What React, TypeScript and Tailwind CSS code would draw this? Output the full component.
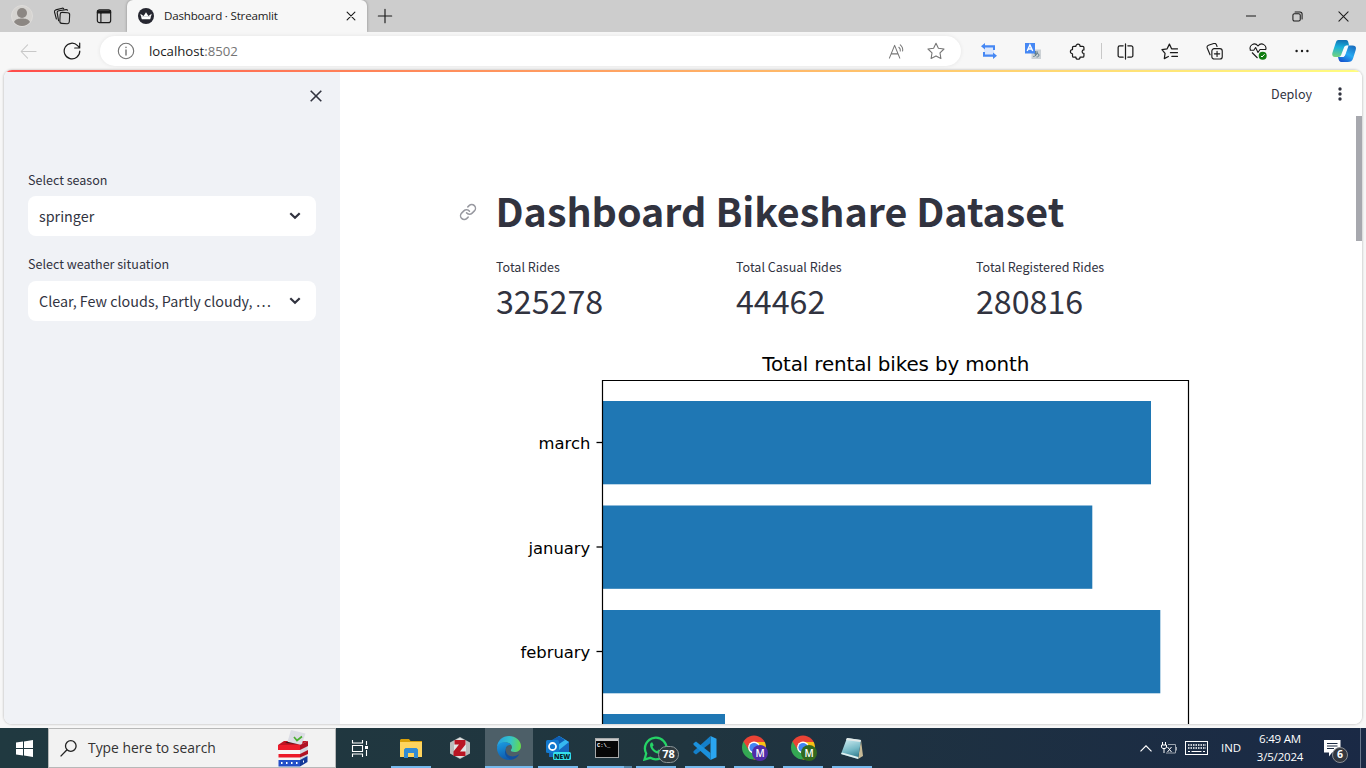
import type { ReactNode } from 'react';

const UI = "font-['Open_Sans','Noto_Sans',sans-serif]";
const BODY = "font-['Noto_Sans_CJK_SC',sans-serif]";

function Line({
  size = 18,
  children,
  color = '#1b1b1b',
  width = 1.1,
}: {
  size?: number;
  children: ReactNode;
  color?: string;
  width?: number;
}) {
  return (
    <svg
      width={size}
      height={size}
      viewBox="0 0 18 18"
      fill="none"
      stroke={color}
      strokeWidth={width}
      strokeLinecap="round"
      strokeLinejoin="round"
      className="shrink-0"
    >
      {children}
    </svg>
  );
}

function Cell({ w, children }: { w: string; children: ReactNode }) {
  return <div className={`flex h-full shrink-0 items-center justify-center ${w}`}>{children}</div>;
}

const STAR = 'M9 1.2 L11.4 6.2 L17 7 L13 10.9 L13.9 16.5 L9 13.9 L4.1 16.5 L5 10.9 L1 7 L6.6 6.2 Z';

function TabStrip() {
  return (
    <div className="flex h-8 shrink-0 bg-[#cdcdcd]">
      <Cell w="w-11">
        <svg width="22" height="22" viewBox="0 0 22 22">
          <circle cx="11" cy="11" r="10.5" fill="#d6d4d1" stroke="#dedcda" />
          <circle cx="11" cy="8" r="5" fill="#8c8783" />
          <path d="M3 17c1.500-3 4.500-3.500 8-3.500s6.500.5 8 3.500c-2 2.800-5 4-8 4s-6-1.200-8-4z" fill="#8c8783" />
        </svg>
      </Cell>
      <Cell w="w-9">
        <Line>
          <rect x="7" y="5.500" width="9.500" height="11" rx="2" transform="rotate(3 11 11)" />
          <path d="M5.600 13.800 4.200 5.800a1.800 1.800 0 0 1 1.500-2l7.500-1.200a1.500 1.500 0 0 1 1.300.6M3.400 12 1.500 5a1.800 1.800 0 0 1 1.200-2.100l6.500-1.700a1.600 1.600 0 0 1 1.500.5" />
        </Line>
      </Cell>
      <Cell w="w-12">
        <Line size={16} width={1.300}>
          <rect x="1.500" y="2" width="15" height="14.500" rx="2.500" />
          <path d="M2 3.500h14M2 5h14" strokeWidth="2.200" />
          <path d="M5.500 6v10" />
        </Line>
      </Cell>
      <div className="-ml-px flex h-8 w-60 items-center rounded-t-md bg-[#f7f7f7] shadow-[0_0_3px_rgba(0,0,0,0.35)] [clip-path:inset(0_-3px_0_-3px)]">
        <svg width="16" height="16" viewBox="0 0 16 16" className="ml-[11px]">
          <circle cx="8" cy="8" r="8" fill="#262730" />
          <path d="M2.300 5.800 5.600 8 8 4.200 10.400 8l3.300-2.200-1.500 5.400H3.800z" fill="#fff" />
          <path d="M3 8.500h10" stroke="#b9bac0" strokeWidth=".5" />
        </svg>
        <span className={`${UI} ml-[10px] flex-1 whitespace-nowrap text-[11.600px] tracking-[-0.2px] text-[#222]`}>
          Dashboard · Streamlit
        </span>
        <div className="mr-[11px] flex">
          <Line size={10} width={2}>
            <path d="M2 2 16 16M16 2 2 16" />
          </Line>
        </div>
      </div>
      <Cell w="w-[35px]">
        <Line size={16} width={1.300}>
          <path d="M9 1.500v15M1.500 9h15" />
        </Line>
      </Cell>
      <div className="flex-1" />
      <Cell w="w-[46px]">
        <Line size={10} width={1.800}>
          <path d="M0 9h18" />
        </Line>
      </Cell>
      <Cell w="w-[46px]">
        <Line size={11} width={1.700}>
          <rect x="1.500" y="4.500" width="12" height="12" rx="2.500" />
          <path d="M5 1.500h8a3.500 3.500 0 0 1 3.500 3.500v8" />
        </Line>
      </Cell>
      <Cell w="w-[46px]">
        <Line size={11} width={1.700}>
          <path d="M1.500 1.500 16.500 16.500M16.500 1.500 1.500 16.500" />
        </Line>
      </Cell>
    </div>
  );
}

function Toolbar() {
  return (
    <div className="flex h-[38px] shrink-0 items-center bg-[#f7f7f7]">
      <Cell w="w-14">
        <Line size={17} color="#c8c8c8">
          <path d="M17 9H1.500M8 2 1.200 9 8 16" />
        </Line>
      </Cell>
      <Cell w="w-8">
        <Line width={1.200}>
          <path d="M16.800 9A7.800 7.800 0 1 1 14.600 3.600L16.500 5.600M16.700 1v5h-5" />
        </Line>
      </Cell>
      <div className="ml-3 flex h-[30px] w-[861px] shrink-0 items-center rounded-full bg-white shadow-[0_0_4px_rgba(0,0,0,0.08)]">
        <div className="ml-[17px] flex">
          <Line color="#737373">
            <circle cx="9" cy="9" r="7.700" />
            <path d="M9 8v5M9 5.300v.3" strokeWidth="1.400" />
          </Line>
        </div>
        <span className={`${UI} ml-[14px] flex-1 pt-px text-[13.200px] text-[#1a1a1a]`}>
          localhost<span className="text-[#747474]">:8502</span>
        </span>
        <Cell w="w-10">
          <Line size={17} color="#767676">
            <path d="M1.500 16 7 2.500 12.500 16M3.500 11.500h7M11.500 4.500a4 4 0 0 1 1.500 4M13 2a7 7 0 0 1 2.500 6.500" />
          </Line>
        </Cell>
        <Cell w="w-10">
          <Line color="#767676">
            <path d={STAR} />
          </Line>
        </Cell>
        <div className="w-[5px]" />
      </div>
      <div className="w-[6px]" />
      <Cell w="w-11">
        <svg width="16" height="16" viewBox="0 0 16 16">
          <path d="M3 3h10v10H3z" fill="#dce8fd" />
          <path d="M4 0v2.200h10V7h-2V4.400H4V6.500L0 3.200zM12 16v-2.200H2V9h2v2.600h8V9.500l4 3.300z" fill="#4688f4" />
        </svg>
      </Cell>
      <Cell w="w-11">
        <svg width="16" height="16" viewBox="0 0 16 16">
          <rect x="6.500" y="6.500" width="9.500" height="9.500" fill="#ccd1d5" />
          <path d="M8 9h5M10.500 8v5M8.200 13.500c2 0 4-2 4.300-4M9 11c1-1 5-1 5 1s-2 2-2.500 2" stroke="#607d8b" fill="none" strokeWidth=".9" />
          <rect width="10" height="10.500" fill="#4688f4" />
          <path d="M2.200 8 4.900 2l2.800 6M3.300 6h3.300" stroke="#fff" strokeWidth="1.400" fill="none" />
        </svg>
      </Cell>
      <Cell w="w-11">
        <Line size={17} width={1.300}>
          <path d="M5 3.500h2.300a2.200 2.200 0 0 1 4.400 0H14.500a1.300 1.300 0 0 1 1.300 1.300V7.300a1.900 1.900 0 0 0 0 3.800V13.700a1.300 1.300 0 0 1-1.300 1.300H11.700a2.200 2.200 0 0 1-4.400 0H5a1.300 1.300 0 0 1-1.300-1.300V11.400a2.200 2.200 0 0 1 0-4.400V4.800A1.300 1.300 0 0 1 5 3.500z" />
        </Line>
      </Cell>
      <div className="mx-[2px] h-4 w-px bg-[#c8c8c8]" />
      <Cell w="w-[43px]">
        <Line size={17} width={1.300}>
          <path d="M9 1v16M6.500 3H3a1.800 1.800 0 0 0-1.800 1.800v8.400A1.800 1.800 0 0 0 3 15h3.500M11.500 3H15a1.800 1.800 0 0 1 1.800 1.800v8.400A1.800 1.800 0 0 1 15 15h-3.500" />
        </Line>
      </Cell>
      <Cell w="w-[45px]">
        <Line size={17} width={1.300}>
          <path d="M7.800 14.300 3.500 16.500 4.300 11 1 7l5.500-.8L8.900 1.200l2.300 4.900M11.500 6.200h6M10 10.200h7.500M11.500 14.200h6" />
        </Line>
      </Cell>
      <Cell w="w-11">
        <Line size={17} width={1.200}>
          <rect x="6.200" y="6" width="11" height="11" rx="2.500" />
          <path d="M11.700 8.700v5.600M8.900 11.500h5.600M4.300 12.500 1.300 5.200a2.200 2.200 0 0 1 1.300-2.800l5.600-1.800a2.300 2.300 0 0 1 2.900 1.400l.6 1.700" />
        </Line>
      </Cell>
      <Cell w="w-11">
        <svg width="18" height="18" viewBox="0 0 18 18" fill="none">
          <path d="M1.500 8C-.5 3.500 5.500-.5 9 4c3.500-4.500 9.500-.5 7.500 4M3 10.500l5.500 5.500M.8 8.200h4L6.600 5.500l2.400 5 2-3h5.500" stroke="#1b1b1b" strokeWidth="1.100" strokeLinejoin="round" />
          <circle cx="13.700" cy="13.700" r="4" fill="#107c10" />
          <path d="m12 14 1 1 2.600-2.800" stroke="#fff" />
        </svg>
      </Cell>
      <Cell w="w-11">
        <svg width="14" height="4" viewBox="0 0 14 4" fill="#1b1b1b">
          <circle cx="1.600" cy="2" r="1.200" />
          <circle cx="7" cy="2" r="1.200" />
          <circle cx="12.400" cy="2" r="1.200" />
        </svg>
      </Cell>
      <Cell w="w-10">
        <svg width="24" height="24" viewBox="0 0 24 24">
          <defs>
            <linearGradient id="cpA" x1="0.300" y1="0" x2="0.200" y2="1">
              <stop offset="0" stopColor="#1273b4" />
              <stop offset=".4" stopColor="#18b0dc" />
              <stop offset="1" stopColor="#75d47c" />
            </linearGradient>
            <linearGradient id="cpB" x1="0.800" y1="0" x2="0.200" y2="1">
              <stop offset="0" stopColor="#1a6fc0" />
              <stop offset=".5" stopColor="#27aaf2" />
              <stop offset="1" stopColor="#1552ce" />
            </linearGradient>
          </defs>
          <path d="M16 6.500h4.500c3 0 4 1.500 3.200 4.500l-2.500 8c-1 3-2.500 4-5.500 4H9.500c-2 0-2.900-2-3.500-5h4c2 0 2.500-1 3-3z" fill="url(#cpB)" />
          <path d="M6.500 1H14c2 0 2.500 2 3 5.500h-2.500c-1.500 0-2.200 1-2.700 2.600L9.300 15.500c-.5 1.500-1.500 2.500-3 2.500H3c-2.500 0-3.300-2-2.500-4.500l3-9C4.300 2 4.900 1 6.500 1z" fill="url(#cpA)" />
          <path d="M14.500 6.700h2l-3 8.500c-.6 1.900-1.500 2.800-3.500 2.800H8.200c1-.3 1.500-1 2-2.600l2-6c.4-1.500 1-2.300 2.300-2.700z" fill="#f4fbff" />
        </svg>
      </Cell>
    </div>
  );
}

function Select({ label, value }: { label: string; value: string }) {
  return (
    <div>
      <div className="flex h-5 items-center text-[12.540px] whitespace-nowrap">{label}</div>
      <div className="mt-[6px] flex h-10 items-center rounded-lg bg-white pr-[15px] pl-[11px]">
        <span className="flex-1 text-[14.330px] whitespace-nowrap">{value}</span>
        <svg width="12" height="8" viewBox="0 0 12 8" fill="none" stroke="#31333f" strokeWidth="2.200">
          <path d="M1.300 1.200 6 5.800l4.700-4.600" />
        </svg>
      </div>
    </div>
  );
}

function Sidebar() {
  return (
    <aside className="flex w-[336px] shrink-0 flex-col bg-[#f0f2f6] px-6">
      <div className="-mr-[6px] flex h-[98px] justify-end pt-[18px]">
        <svg width="12" height="12" viewBox="0 0 12 12" stroke="#31333f" strokeWidth="1.600">
          <path d="M.7.7 11.300 11.300M11.300.7.7 11.300" />
        </svg>
      </div>
      <div className="flex flex-col gap-[18.500px]">
        <Select label="Select season" value="springer" />
        <Select label="Select weather situation" value="Clear, Few clouds, Partly cloudy, …" />
      </div>
    </aside>
  );
}

function Metric({ label, value }: { label: string; value: string }) {
  return (
    <div className="w-60">
      <div className="flex h-5 items-center text-[12.540px] whitespace-nowrap">{label}</div>
      <div className="flex h-[46px] items-center text-[32.200px]">{value}</div>
    </div>
  );
}

const BARS = [
  { label: 'march', y: 51, w: 548 },
  { label: 'january', y: 155.5, w: 489.3 },
  { label: 'february', y: 260, w: 557.3 },
  { label: '', y: 364, w: 122 },
];

function Chart() {
  return (
    <svg width="704" height="374" viewBox="0 0 704 374" className="block font-['DejaVu_Sans',sans-serif]">
      <text x="399.800" y="21" fontSize="19.900" textAnchor="middle" textLength="267">
        Total rental bikes by month
      </text>
      {BARS.map((b) => (
        <g key={b.y}>
          <rect x="107" y={b.y} width={b.w} height="83.300" fill="#1f77b4" />
          {b.label && (
            <>
              <path d={`M100.500 ${b.y + 41.5}h6`} stroke="#000" strokeWidth="1.300" />
              <text x="94.300" y={b.y + 48} fontSize="16.400" textAnchor="end">
                {b.label}
              </text>
            </>
          )}
        </g>
      ))}
      <path d="M106.500 374V30.500H692.500V374" fill="none" stroke="#000" strokeWidth="1.200" />
    </svg>
  );
}

function Main() {
  return (
    <main className="flex min-w-0 flex-1 bg-white">
      <div className="flex flex-1 flex-col pl-[119px]">
        <div className="flex h-11 shrink-0 items-center justify-end pr-[14px]">
          <span className="text-[12.540px]">Deploy</span>
          <svg width="4" height="14" viewBox="0 0 4 14" fill="#31333f" className="ml-[26px]">
            <circle cx="2" cy="2" r="1.700" />
            <circle cx="2" cy="7" r="1.700" />
            <circle cx="2" cy="12" r="1.700" />
          </svg>
        </div>
        <div className="mt-[69px] flex h-[53px] shrink-0 items-center">
          <svg
            width="18"
            height="18"
            viewBox="0 0 24 24"
            fill="none"
            stroke="#9899a0"
            strokeWidth="2"
            strokeLinecap="round"
            strokeLinejoin="round"
          >
            <path d="M10 13a5 5 0 0 0 7.540.54l3-3a5 5 0 0 0-7.070-7.070l-1.720 1.710" />
            <path d="M14 11a5 5 0 0 0-7.540-.54l-3 3a5 5 0 0 0 7.070 7.070l1.710-1.710" />
          </svg>
          <h1 className="ml-[18.500px] pb-[3px] text-[39.400px] font-bold whitespace-nowrap">
            Dashboard Bikeshare Dataset
          </h1>
        </div>
        <div className="mt-[19px] ml-[37px] flex shrink-0">
          <Metric label="Total Rides" value="325278" />
          <Metric label="Total Casual Rides" value="44462" />
          <Metric label="Total Registered Rides" value="280816" />
        </div>
        <div className="mt-[27px] ml-[37px]">
          <Chart />
        </div>
      </div>
      <div className="mt-11 h-[125px] w-[6px] bg-[#a7a8ae]" />
    </main>
  );
}

function Task({ children, open = true, active = false }: { children: ReactNode; open?: boolean; active?: boolean }) {
  return (
    <div
      className={`relative flex h-10 w-12 shrink-0 flex-col items-center ${active ? 'bg-[#4d5f68]' : ''}`}
    >
      <div className="flex h-[38px] items-center pt-[2px]">{children}</div>
      {open && <div className={`h-[2px] bg-[#76b9ed] ${active ? 'w-12' : 'w-10'}`} />}
    </div>
  );
}

function Chrome({ id, badge }: { id: string; badge: string }) {
  return (
    <svg width="26" height="26" viewBox="0 0 26 26" className={`${UI} overflow-visible`}>
      <clipPath id={id}>
        <circle cx="13" cy="12.500" r="12" />
      </clipPath>
      <g clipPath={`url(#${id})`}>
        <path d="M0 0h26v7H13L7.800 15.500 0 6z" fill="#ea4335" />
        <path d="M0 5.500 2.600 6.500 8 15.500l5 2.500 3 0-4.500 8H0z" fill="#34a853" />
        <path d="M13 7h13v19H11.500L18.200 15.500z" fill="#fbc116" />
      </g>
      <circle cx="13" cy="12.500" r="5.900" fill="#fff" />
      <circle cx="13" cy="12.500" r="4.600" fill="#4285f4" />
      <circle cx="19" cy="18" r="8" fill={badge} />
      <text x="19" y="21.500" fontSize="10" fontWeight="600" fill="#fff" textAnchor="middle">
        M
      </text>
    </svg>
  );
}

function Taskbar() {
  return (
    <div className={`${UI} flex h-10 shrink-0 bg-linear-to-r from-[#203940] via-[#20353f] to-[#1a2945] text-white`}>
      <Cell w="w-12">
        <svg width="17" height="17" viewBox="0 0 17 17" fill="#fff">
          <path d="M0 2.600 7 1.600V8H0zM8 1.400 17 0v8H8zM0 9h7v6.400L0 14.400zM8 9h9v8l-9-1.400z" />
        </svg>
      </Cell>
      <div className="flex h-10 w-72 shrink-0 items-center border border-[#b7b8b8] bg-[#f2f2f2]">
        <svg width="17" height="17" viewBox="0 0 17 17" fill="none" stroke="#222" strokeWidth="1.300" className="ml-[11px]">
          <circle cx="10.800" cy="6" r="5.300" />
          <path d="M7 9.800.6 16.400" />
        </svg>
        <span className="ml-[11px] flex-1 text-[13.900px] whitespace-nowrap text-[#333]">Type here to search</span>
        <svg width="34" height="38" viewBox="0 0 34 38" className="mr-[24px]">
          <path d="m1 16 6-4h24l-5 5z" fill="#c11322" />
          <path d="m8 14 3-1.500h15l-3 2.500z" fill="#3a1218" />
          <path d="m14 1 14.500 3.500-4 11.500-14-3.200z" fill="#dcdde5" />
          <path d="m17 8 3 3.500 5-4" fill="none" stroke="#4caf32" strokeWidth="1.700" />
          <path d="M1 16h22v21H2z" fill="#f7f7f7" />
          <path d="m23 16 8-4-1 20-7 5z" fill="#d3d6df" />
          <path d="M1 16h22v5H1zM1.500 25H23v3.500H1.500z" fill="#ec1c2b" />
          <path d="m23 16 8-4v5l-8 4zM23 25l8-4v4l-8 3.500z" fill="#b01224" />
          <path d="M1.500 31H23v6.500H1.500z" fill="#2550c8" />
          <path d="m23 31 7.500-4v6L23 37.500z" fill="#143a99" />
          <path d="M4 34h1.500M9 34h1.500M14 34h1.500M19 34h1.500M26 32.500h1" stroke="#fff" strokeWidth="2" />
        </svg>
      </div>
      <div className="flex flex-1 gap-px">
        <Task open={false}>
          <svg width="18" height="17" viewBox="0 0 18 17" fill="none" stroke="#fff" strokeWidth="1.100">
            <path d="M1.500 0v3h10V0M1.500 17v-3h10v3M1.500 5.500h10v6h-10zM15.500 1v4M15.500 10v6" />
            <path d="M14 6h3v3h-3z" fill="#fff" stroke="none" />
          </svg>
        </Task>
        <div className="w-px" />
        <Task>
          <svg width="22" height="19" viewBox="0 0 22 19">
            <path d="M0 1 1 0h8l1.500 2H22v16H0z" fill="#dba008" />
            <path d="M0 3h22v15H0z" fill="#ffd45e" />
            <path d="M4 10.500 5.500 9h11L18 10.500V19h-4v-5H8v5H4z" fill="#338bd3" />
          </svg>
        </Task>
        <Task open={false}>
          <svg width="20" height="22" viewBox="0 0 20 22">
            <path d="m10 0 10 5.500v11L10 22 0 16.500v-11z" fill="#b9bdbd" />
            <path d="m10 1 6 3v14l-6 3-6-3V4z" fill="#e3e5e5" />
            <path d="M4.500 3h11v4.500l-5.500 7h5.500V19h-12v-4.500L9 7.500H4.500z" fill="#b91523" />
          </svg>
        </Task>
        <Task active>
          <svg width="24" height="24" viewBox="0 0 24 24">
            <defs>
              <linearGradient id="edA" x1="0" y1="0.400" x2="1" y2="0.500">
                <stop offset="0" stopColor="#249fe2" />
                <stop offset=".55" stopColor="#35c4c8" />
                <stop offset="1" stopColor="#65d94e" />
              </linearGradient>
              <linearGradient id="edB" x1="0" y1="0" x2="0.300" y2="1">
                <stop offset="0" stopColor="#1b9de2" />
                <stop offset="1" stopColor="#0f5cae" />
              </linearGradient>
            </defs>
            <path d="M0 11C.5 4.500 5.500 0 12 0s12 4.700 12 10c0 4-3 6-6.500 6-3 0-4-1.200-3.500-2.200.5-.8 1-1.300 1-2.600C15 8.500 12 6.500 8.500 6.500S1.500 8 0 11z" fill="url(#edA)" />
            <path d="M0 12c.5-4 4-5.700 7.500-5.700 3 0 5.500 1 7 3C11 8.500 8.500 10.500 8.500 14c0 5 4.500 7.800 8 8.200C15 23.500 13.500 24 12 24 5 24 0 18.500 0 12z" fill="url(#edB)" />
            <path d="M11.500 9.700c-5 3.300-2.500 9.800 2.500 10.600 3 .4 6-.5 8.200-2.300-1 2.500-3.200 4.600-6.200 5.400-7 .6-11.500-7.400-4.500-13.700z" fill="#124f9e" />
          </svg>
        </Task>
        <Task>
          <svg width="26" height="24" viewBox="0 0 26 24">
            <path d="M4 6 14 0l10 6v15H4z" fill="#1568bf" />
            <path d="M14 0 24 6 14 14 6 7z" fill="#35b8f1" />
            <path d="m7 4 7-4 6 4-12 8z" fill="#0e5db2" />
            <rect x="1" y="4" width="13" height="13" rx="1.500" fill="#1379ce" />
            <circle cx="7.500" cy="10.500" r="3.500" fill="none" stroke="#fff" strokeWidth="1.800" />
            <rect x="8" y="16" width="18" height="8" rx="1.500" fill="#35e1ec" />
            <text x="17" y="22.700" fontSize="6.700" fontWeight="800" textAnchor="middle" fill="#08242c">
              NEW
            </text>
          </svg>
        </Task>
        <Task>
          <svg width="24" height="20" viewBox="0 0 24 20">
            <rect x=".5" y=".5" width="23" height="19" fill="#070707" stroke="#a7a9aa" />
            <path d="M1 1h22v2H1z" fill="#cbcbcb" />
            <text x="2" y="9" fontSize="5.500" fontWeight="700" fill="#fff" className="font-['Liberation_Mono',monospace]">
              C:\_
            </text>
          </svg>
          <div className="absolute right-[-1px] bottom-0 h-[2px] w-2 bg-[#5587aa]" />
        </Task>
        <Task>
          <svg width="25" height="25" viewBox="0 0 25 25" fill="none" className="-ml-[2px]">
            <path d="m1.500 23.500 1.700-6A10.800 10.800 0 1 1 7.300 21.800z" stroke="#25d366" strokeWidth="2.300" />
            <path d="M8.300 6.500c-2.800 2-.5 6.500 2 8.800s6.500 3.800 8 1.200l.3-1.600-3-1.500-1.400 1.700c-2-.6-3.800-2.300-4.700-4.400l1.200-1.400L9.400 6.500z" fill="#25d366" />
          </svg>
          <div className="absolute top-[18px] left-[26px] flex h-[17px] w-[21px] items-center justify-center rounded-full border border-[#8b9598] bg-[#303b40] text-[11px] font-bold">
            78
          </div>
        </Task>
        <Task>
          <svg width="24" height="24" viewBox="0 0 24 24">
            <path d="m17.500 0 6 2.800v18.400l-6 2.800z" fill="#2aa5f0" />
            <path d="M17.500 0v7L3 18.500.5 16.800v-1.500z" fill="#147fc9" />
            <path d="M17.500 24v-7L3 5.500.5 7.200v1.500z" fill="#1b91dc" />
          </svg>
        </Task>
        <Task>
          <Chrome id="c1" badge="#512da8" />
        </Task>
        <Task>
          <Chrome id="c2" badge="#33691e" />
        </Task>
        <Task>
          <svg width="24" height="22" viewBox="0 0 24 22">
            <defs>
              <linearGradient id="np" x1="0.200" y1="0" x2="0.500" y2="1">
                <stop offset="0" stopColor="#d5f0f5" />
                <stop offset=".6" stopColor="#76b9c6" />
                <stop offset="1" stopColor="#327e90" />
              </linearGradient>
            </defs>
            <path d="m21 3 2 16-5 3z" fill="#c6b996" />
            <path d="m7 1 14 2-3 19-17-5z" fill="url(#np)" />
            <path d="m7 1 14 2-.5 2L6 3z" fill="#e4e9e8" />
            <path d="m1 17 17 5 .4-2L2 15.500z" fill="#dfeff0" />
          </svg>
        </Task>
      </div>
      <div className="flex items-center">
        <svg width="12" height="7" viewBox="0 0 12 7" fill="none" stroke="#fff" strokeWidth="1.200">
          <path d="M.5 6.300 6 .8l5.500 5.500" />
        </svg>
        <svg width="16" height="12" viewBox="0 0 16 12" fill="none" stroke="#fff" className="ml-[9px]">
          <path d="M1.500 0v3M4.500 0v3M.5 3h5v2.500l-1.500 1H2l-1.500-1zM3 6.500V11M6.500 5l4 5M10.500 5l-4 5" />
          <path d="M7 2.500h7.500v8.500H5M15.500 5v3.500" stroke="#9ca4ae" />
        </svg>
        <svg width="23" height="14" viewBox="0 0 23 14" fill="none" stroke="#fff" className="ml-2">
          <rect x=".5" y=".5" width="22" height="13" />
          <path d="M3 4h18M3 7h18" strokeDasharray="1.500 1" strokeWidth="1.300" />
          <path d="M3 10.500h2M6.500 10.500h10M18 10.500h2" strokeWidth="1.200" />
        </svg>
        <span className="ml-[13px] w-5 text-[11.500px]">IND</span>
        <div className="ml-[11px] flex w-[56px] flex-col items-center text-[11.500px] leading-[18px] tracking-[-0.2px] whitespace-nowrap">
          <span>6:49 AM</span>
          <span>3/5/2024</span>
        </div>
        <div className="relative ml-[16px] h-10 w-6">
          <svg width="17" height="17" viewBox="0 0 17 17" className="mt-[12px]">
            <path d="M0 0h16.500v12.500H8L5 16.500v-4H0z" fill="#fff" />
            <path d="M3 3.500h10.500M3 6h10.500M3 8.500h7" stroke="#1c2b43" />
          </svg>
          <div className="absolute top-[19px] left-[8px] flex h-4 w-4 items-center justify-center rounded-full border border-[#8a8e94] bg-[#34383f] text-[10.500px] font-bold">
            6
          </div>
        </div>
        <div className="ml-[12px] h-10 w-px bg-[#68758a]" />
        <div className="w-[5px]" />
      </div>
    </div>
  );
}

export default function App() {
  return (
    <div className={`${BODY} flex h-[768px] w-[1366px] flex-col overflow-hidden bg-[#f7f7f7] leading-normal text-[#31333f]`}>
      <TabStrip />
      <Toolbar />
      <div className="mx-1 flex h-[654px] shrink-0 flex-col overflow-hidden rounded-lg bg-white shadow-[0_0_2px_1px_rgba(0,0,0,0.14)]">
        <div className="h-[2px] shrink-0 bg-linear-to-r from-[#ff4b4b] to-[#fffd80]" />
        <div className="flex min-h-0 flex-1">
          <Sidebar />
          <Main />
        </div>
      </div>
      <div className="h-1 shrink-0" />
      <Taskbar />
    </div>
  );
}
